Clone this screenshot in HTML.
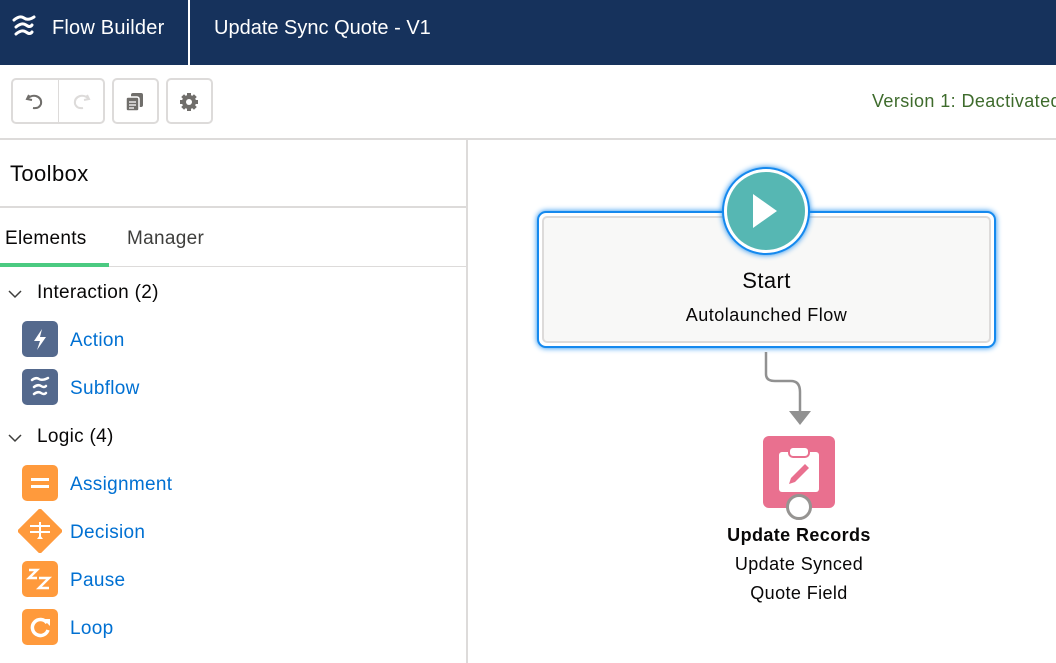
<!DOCTYPE html>
<html><head><meta charset="utf-8"><style>
*{margin:0;padding:0;box-sizing:border-box}
body{width:1056px;height:663px;overflow:hidden;background:#fff;font-family:"Liberation Sans",sans-serif;position:relative}
.a{position:absolute}
.hdr{left:0;top:0;width:1056px;height:65px;background:#16325c}
.btn{border:2px solid #dddbda;border-radius:5px;background:#fff}
.item{position:absolute;left:70px;font-size:19px;color:#0070d2;transform:translateY(-50%);margin-top:2px;letter-spacing:0.3px}
.ic{position:absolute;left:22px;width:36px;height:36px;border-radius:5px}
</style></head><body>
<div class="a hdr"></div>
<svg class="a" style="left:12px;top:14px" width="24" height="26" viewBox="0 0 24 26"><g fill="none" stroke="#fff" stroke-width="3" stroke-linecap="round"><path d="M2 6 Q8 1 12 4 T22 3"/><path d="M4 13 Q10 8 14 11 T20 11"/><path d="M4 20 Q10 15 14 18 T20 18"/></g></svg>
<div class="a" style="left:52px;top:17px;color:#fff;font-size:20px;letter-spacing:0.2px">Flow Builder</div>
<div class="a" style="left:188px;top:0;width:2px;height:65px;background:#fff"></div>
<div class="a" style="left:214px;top:17px;color:#fff;font-size:20px">Update Sync Quote - V1</div>
<div class="a btn" style="left:11px;top:78px;width:94px;height:46px"></div>
<div class="a" style="left:58px;top:79px;width:1px;height:44px;background:#dddbda"></div>
<svg class="a" style="left:24px;top:90px" width="22" height="22" viewBox="0 0 22 22"><path d="M5 5 L3 9 L8 10 M3 9 Q7 5 12 6 Q18 8 17 14 Q15 19 9 18" fill="none" stroke="#706e6b" stroke-width="2"/></svg>
<svg class="a" style="left:70px;top:90px" width="22" height="22" viewBox="0 0 22 22"><path d="M17 5 L19 9 L14 10 M19 9 Q15 5 10 6 Q4 8 5 14 Q7 19 13 18" fill="none" stroke="#dddbda" stroke-width="2"/></svg>
<div class="a btn" style="left:112px;top:78px;width:47px;height:46px"></div>
<svg class="a" style="left:124px;top:91px" width="22" height="22" viewBox="0 0 22 22"><rect x="7" y="2" width="12" height="14" rx="2" fill="#706e6b"/><rect x="2" y="6" width="13" height="14" rx="2" fill="#706e6b" stroke="#fff" stroke-width="1.5"/><path d="M5 11h7M5 14h7M5 17h5" stroke="#fff" stroke-width="1.3"/></svg>
<div class="a btn" style="left:166px;top:78px;width:47px;height:46px"></div>
<svg class="a" style="left:178px;top:91px" width="22" height="22" viewBox="0 0 22 22"><g fill="#706e6b"><circle cx="11" cy="11" r="7"/><rect x="9" y="2" width="4" height="18"/><rect x="2" y="9" width="18" height="4"/><rect x="9" y="2" width="4" height="18" transform="rotate(45 11 11)"/><rect x="9" y="2" width="4" height="18" transform="rotate(-45 11 11)"/></g><circle cx="11" cy="11" r="3" fill="#fff"/></svg>
<div class="a" style="left:872px;top:91px;font-size:18px;color:#3e6b2c;white-space:nowrap;letter-spacing:0.4px">Version 1: Deactivated</div>
<div class="a" style="left:0;top:138px;width:1056px;height:2px;background:#dddbda"></div>
<div class="a" style="left:466px;top:140px;width:2px;height:523px;background:#dddbda"></div>
<div class="a" style="left:10px;top:161px;font-size:22px;color:#080707;letter-spacing:0.4px">Toolbox</div>
<div class="a" style="left:0;top:206px;width:466px;height:2px;background:#dddbda"></div>
<div class="a" style="left:5px;top:228px;font-size:19px;color:#080707;letter-spacing:0.3px">Elements</div>
<div class="a" style="left:127px;top:228px;font-size:19px;color:#3e3e3c;letter-spacing:0.3px">Manager</div>
<div class="a" style="left:0;top:266px;width:466px;height:1px;background:#dddbda"></div>
<div class="a" style="left:0;top:263px;width:109px;height:4px;background:#4bca81"></div>
<svg class="a" style="left:8px;top:289px" width="14" height="10"><path d="M1 2 L7 8 L13 2" fill="none" stroke="#3e3e3c" stroke-width="1.5"/></svg>
<div class="a" style="left:37px;top:282px;font-size:19px;color:#080707;letter-spacing:0.3px">Interaction (2)</div>
<svg class="a" style="left:8px;top:433px" width="14" height="10"><path d="M1 2 L7 8 L13 2" fill="none" stroke="#3e3e3c" stroke-width="1.5"/></svg>
<div class="a" style="left:37px;top:426px;font-size:19px;color:#080707;letter-spacing:0.3px">Logic (4)</div>
<div class="ic" style="top:321px;background:#54698d"><svg width="36" height="36"><path d="M20 8 L12 20 H18 L15 29 L24 16 H18 Z" fill="#fff"/></svg></div>
<div class="item" style="top:339px">Action</div>
<div class="ic" style="top:369px;background:#54698d"><svg width="36" height="36"><g fill="none" stroke="#fff" stroke-width="2.5" stroke-linecap="round"><path d="M10 11 Q14 8 17 10 T26 9"/><path d="M12 18 Q16 15 19 17 T24 17"/><path d="M12 25 Q16 22 19 24 T24 24"/></g></svg></div>
<div class="item" style="top:387px">Subflow</div>
<div class="ic" style="top:465px;background:#ff9a3c"><svg width="36" height="36"><rect x="9" y="13" width="18" height="3" fill="#fff"/><rect x="9" y="20" width="18" height="3" fill="#fff"/></svg></div>
<div class="item" style="top:483px">Assignment</div>
<svg class="a" style="left:18px;top:509px" width="44" height="44"><path d="M22 1 L43 22 L22 43 L1 22 Z" fill="#ff9a3c" stroke="#ff9a3c" stroke-width="3" stroke-linejoin="round"/><g stroke="#fff" stroke-width="2"><path d="M12 17h20M12 23h20M22 13v16"/></g><path d="M19 30h6l-3-4z" fill="#fff"/></svg>
<div class="item" style="top:531px">Decision</div>
<div class="ic" style="top:561px;background:#ff9a3c"><svg width="36" height="36"><path d="M7 9h8l-8 8h8M17 17h10l-10 10h10" fill="none" stroke="#fff" stroke-width="2.5"/></svg></div>
<div class="item" style="top:579px">Pause</div>
<div class="ic" style="top:609px;background:#ff9a3c"><svg width="36" height="36"><path d="M25 14 A8 8 0 1 0 26 21" fill="none" stroke="#fff" stroke-width="3.5"/><path d="M21 10 L28 10 L28 17 Z" fill="#fff"/></svg></div>
<div class="item" style="top:627px">Loop</div>
<div class="a" style="left:537px;top:211px;width:459px;height:137px;border:2px solid #1589ee;border-radius:9px;box-shadow:0 0 6px #1589ee;background:#fff"></div>
<div class="a" style="left:542px;top:216px;width:449px;height:127px;border:2px solid #dddbda;border-radius:5px;background:#f8f8f7"></div>
<div class="a" style="left:722px;top:167px;width:88px;height:88px;border-radius:50%;background:#fff;border:2px solid #1589ee;box-shadow:0 0 6px #1589ee"></div>
<div class="a" style="left:727px;top:172px;width:78px;height:78px;border-radius:50%;background:#56b7b3"></div>
<svg class="a" style="left:750px;top:191px" width="30" height="40"><path d="M3 3 L27 20 L3 37 Z" fill="#fff"/></svg>
<div class="a" style="left:537px;top:268px;width:459px;text-align:center;font-size:22px;color:#080707;letter-spacing:0.4px">Start</div>
<div class="a" style="left:537px;top:305px;width:459px;text-align:center;font-size:18px;color:#080707;letter-spacing:0.5px">Autolaunched Flow</div>
<svg class="a" style="left:755px;top:352px" width="60" height="76"><path d="M11 0 V22 Q11 29 20 29 H36 Q45 29 45 40 V60" fill="none" stroke="#919191" stroke-width="2.5"/><path d="M34 59 H56 L45 73 Z" fill="#919191"/></svg>
<div class="a" style="left:763px;top:436px;width:72px;height:72px;border-radius:6px;background:#e9708f"></div>
<svg class="a" style="left:763px;top:436px" width="72" height="72"><rect x="16" y="16" width="40" height="40" rx="3" fill="#fff"/><rect x="26" y="11" width="20" height="10" rx="4" fill="#fff" stroke="#e9708f" stroke-width="2"/><path d="M26 48 L28 42 L42 28 L46 32 L32 46 Z" fill="#e9708f"/></svg>
<div class="a" style="left:786px;top:494px;width:26px;height:26px;border-radius:50%;background:#fff;border:3px solid #969492"></div>
<div class="a" style="left:650px;top:525px;width:298px;text-align:center;font-size:18px;font-weight:bold;color:#080707;letter-spacing:0.4px">Update Records</div>
<div class="a" style="left:650px;top:550px;width:298px;text-align:center;font-size:18px;color:#080707;line-height:29px;letter-spacing:0.4px">Update Synced<br>Quote Field</div>
</body></html>
